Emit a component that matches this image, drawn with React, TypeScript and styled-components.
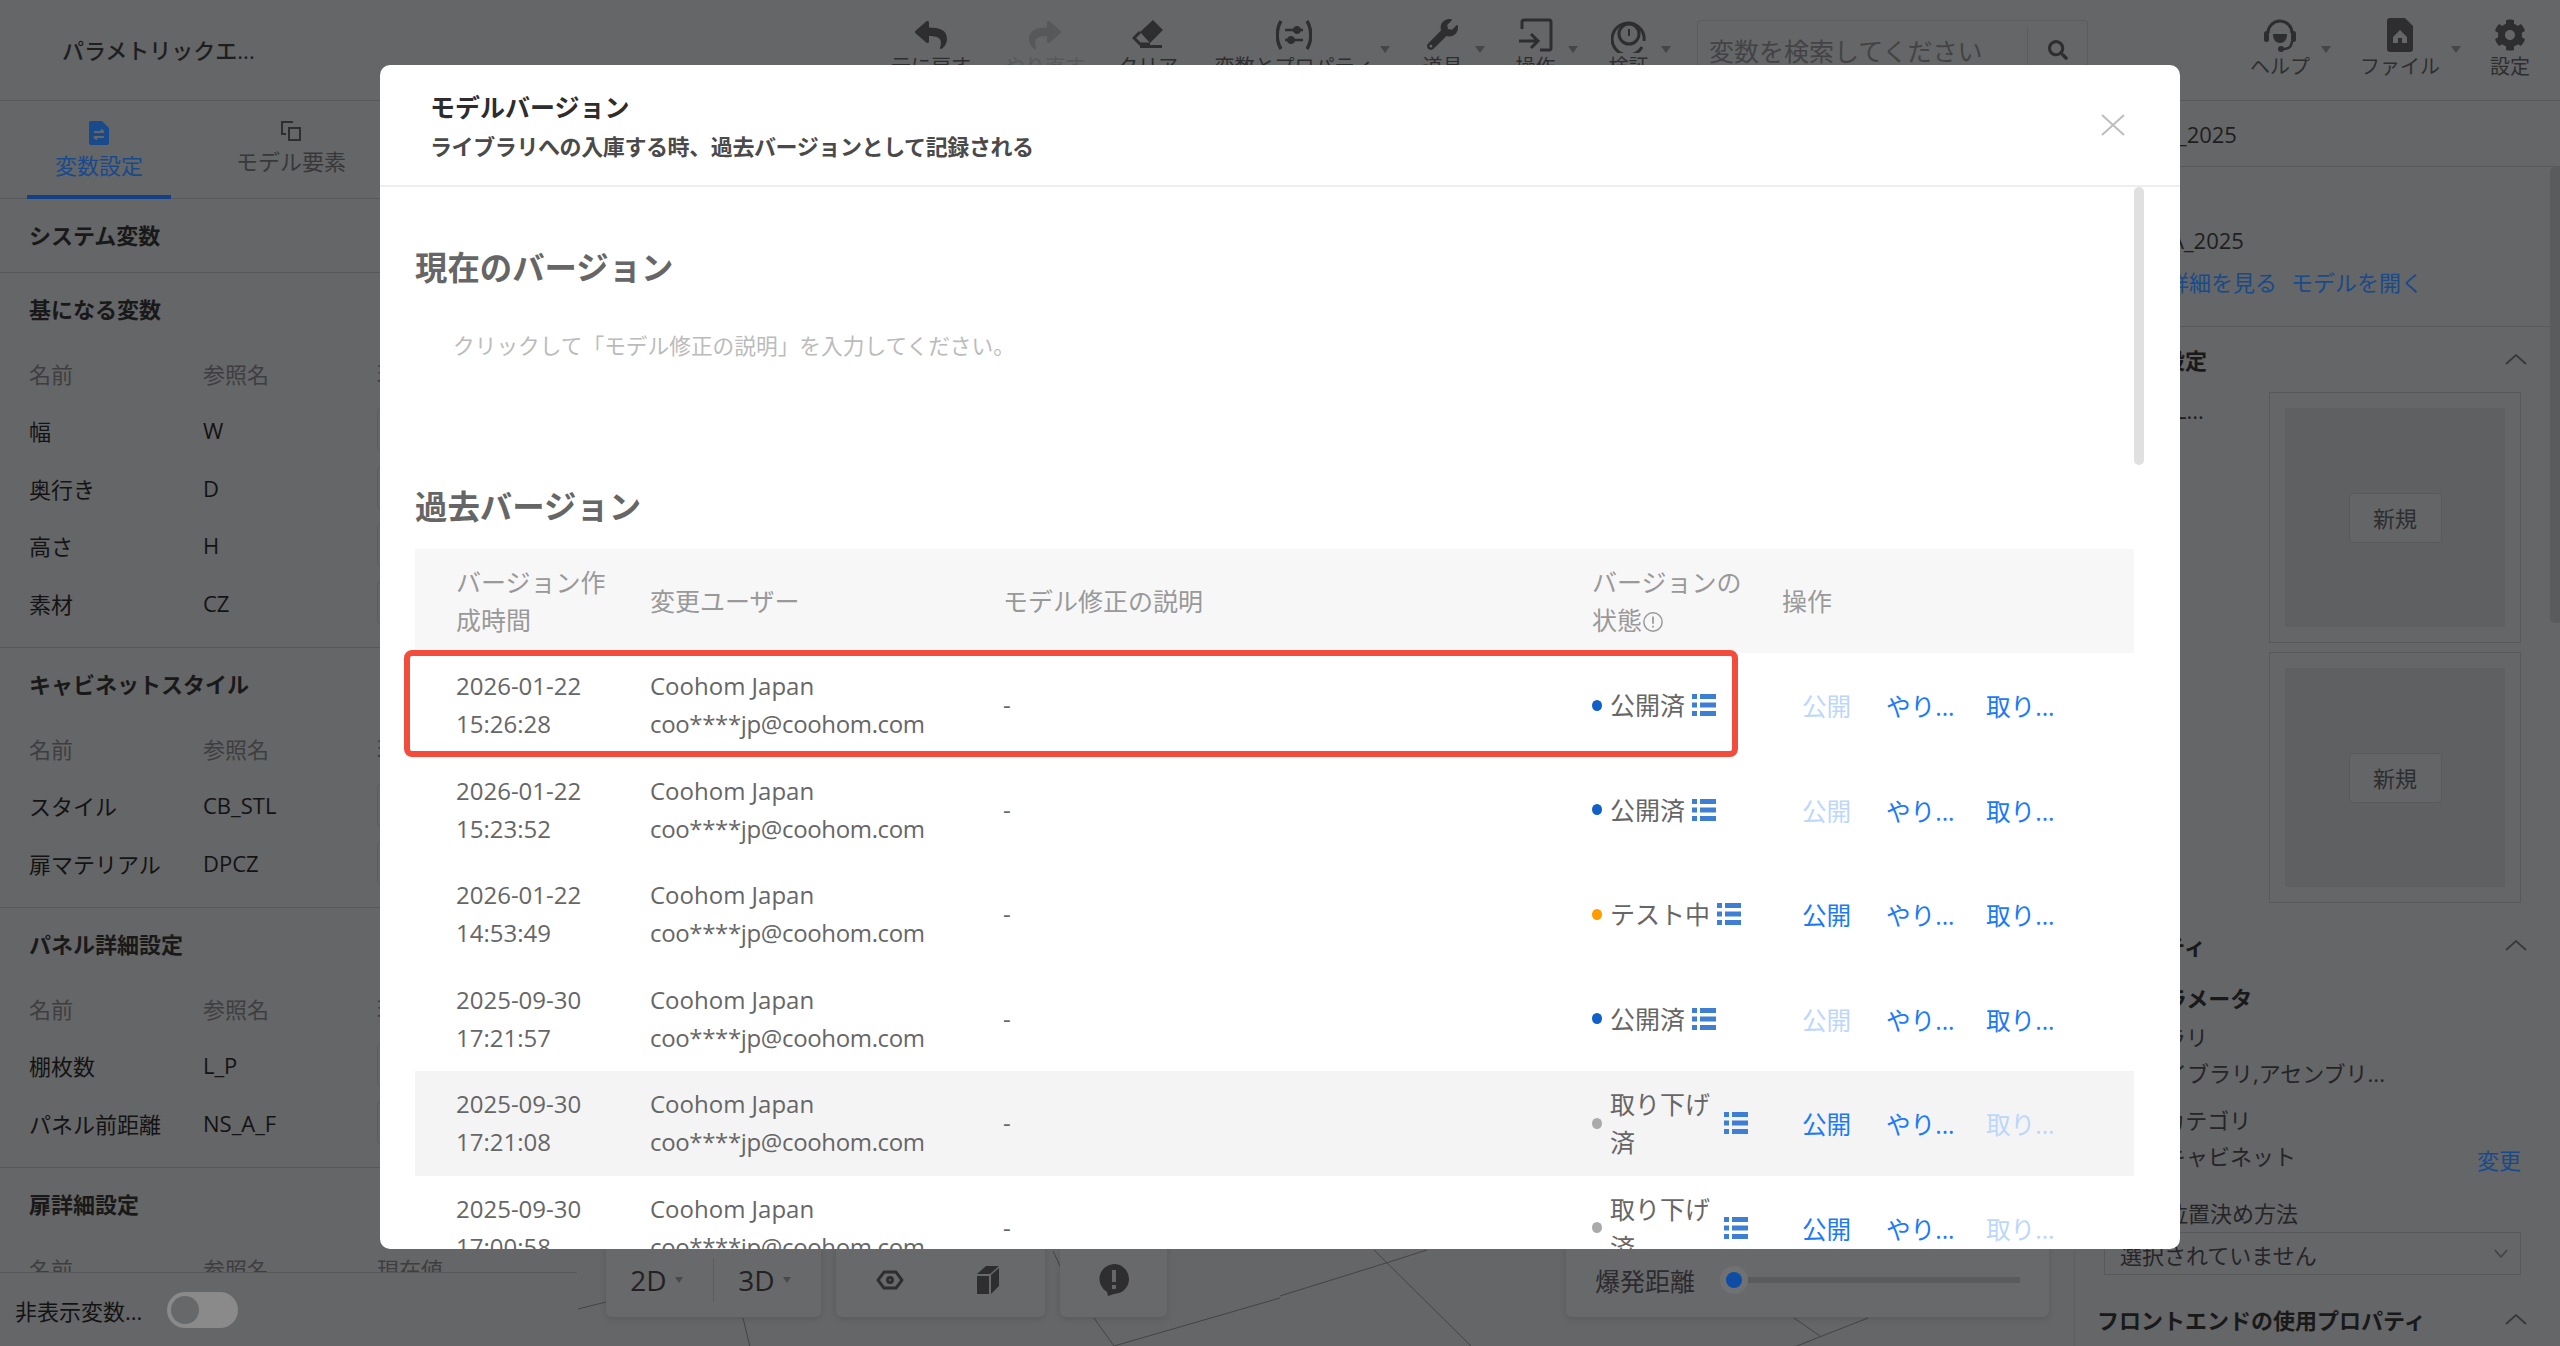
import React from 'react'
import styled, { createGlobalStyle } from 'styled-components'
import { FaCog, FaReply, FaSearch, FaShare, FaWrench } from 'react-icons/fa'

const GlobalStyle = createGlobalStyle`
  html, body {
    margin: 0;
    padding: 0;
    background: #656667;
  }
  * {
    box-sizing: border-box;
  }
  body {
    font-family: "Open Sans", "Noto Sans CJK JP", sans-serif;
    color: #131314;
  }
`

const versions = [
  { date: '2026-01-22', time: '15:26:28', status: 'published', publish: false, revoke: true },
  { date: '2026-01-22', time: '15:23:52', status: 'published', publish: false, revoke: true },
  { date: '2026-01-22', time: '14:53:49', status: 'testing', publish: true, revoke: true },
  { date: '2025-09-30', time: '17:21:57', status: 'published', publish: false, revoke: true },
  { date: '2025-09-30', time: '17:21:08', status: 'revoked', publish: true, revoke: false },
  { date: '2025-09-30', time: '17:00:58', status: 'revoked', publish: true, revoke: false },
]

const statusLabel = { published: '公開済', testing: 'テスト中', revoked: '取り下げ済' }
const statusColor = { published: '#1160c8', testing: '#ff9d00', revoked: '#aaaaaa' }

function EraserIcon() {
  return (
    <svg width="32" height="30" viewBox="0 0 32 30">
      <path d="M21 0 31 10 18 23 8 12Z" fill="currentColor" />
      <path d="M8 12 2 18 8 24H18" fill="none" stroke="currentColor" strokeWidth="3" />
      <path d="M8 26.5H30" stroke="currentColor" strokeWidth="3" />
    </svg>
  )
}

function VarIcon() {
  return (
    <svg width="36" height="30" viewBox="0 0 36 30" fill="none" stroke="currentColor">
      <path d="M5 1C0 9 0 21 5 29M31 1C36 9 36 21 31 29" strokeWidth="3.4" />
      <path d="M9 10H27M9 20H27" strokeWidth="2.4" />
      <circle cx="21" cy="10" r="3.6" fill="currentColor" />
      <circle cx="15" cy="20" r="3.6" fill="currentColor" />
    </svg>
  )
}

function EnterIcon() {
  return (
    <svg width="34" height="34" viewBox="0 0 34 34" fill="none" stroke="currentColor" strokeWidth="3">
      <path d="M3 11V4Q3 2 5 2H30Q32 2 32 4V30Q32 32 30 32H21" />
      <path d="M0 23H19M12 16 19 23 12 30" />
    </svg>
  )
}

function VerifyIcon() {
  return (
    <svg width="36" height="36" viewBox="0 0 36 36" fill="none" stroke="currentColor">
      <path d="M31 30A16 16 0 1 1 33 24" strokeWidth="3" />
      <circle cx="18" cy="17" r="10" strokeWidth="3" />
      <path d="M18 12V19" strokeWidth="2" />
    </svg>
  )
}

function HeadsetIcon() {
  return (
    <svg width="34" height="34" viewBox="0 0 34 34" fill="currentColor">
      <path d="M5 15A12 12 0 0 1 29 15" fill="none" stroke="currentColor" strokeWidth="3" />
      <rect x="1" y="13" width="5" height="11" rx="2.5" />
      <rect x="28" y="13" width="5" height="11" rx="2.5" />
      <path d="M10 16H24C24 22 21 25 17 25S10 22 10 16Z" />
      <path d="M29 23Q29 31 20 31" fill="none" stroke="currentColor" strokeWidth="2.4" />
      <circle cx="18" cy="31" r="3" />
    </svg>
  )
}

function FileHomeIcon() {
  return (
    <svg width="26" height="34" viewBox="0 0 26 34">
      <path d="M3 0H18L26 8V31Q26 34 23 34H3Q0 34 0 31V3Q0 0 3 0Z" fill="currentColor" />
      <path d="M13 12 20 19V25H15V20H11V25H6V19Z" fill="#656667" />
    </svg>
  )
}

function TabDocIcon() {
  return (
    <svg width="20" height="24" viewBox="0 0 20 24">
      <path d="M2 0H13L20 7V22Q20 24 18 24H2Q0 24 0 22V2Q0 0 2 0Z" fill="#184a8c" />
      <path d="M5 11H15M5 16H15M12 8.5 15 11M8 18.5 5 16" stroke="#656667" strokeWidth="2" fill="none" />
    </svg>
  )
}

function TabElementIcon() {
  return (
    <svg width="20" height="20" viewBox="0 0 20 20" fill="none" stroke="#2e2e30" strokeWidth="2">
      <path d="M12 1H1V13H5" />
      <rect x="8" y="7" width="11" height="12" />
    </svg>
  )
}

function HexEyeIcon({ size = 28 }: { size?: number }) {
  return (
    <svg width={size} height={size * 0.72} viewBox="0 0 28 20" fill="none" stroke="#2e2e30" strokeWidth="3">
      <path d="M8 2H20L26 10 20 18H8L2 10Z" strokeLinejoin="round" />
      <circle cx="14" cy="10" r="2.5" />
    </svg>
  )
}

function StarFileIcon() {
  return (
    <svg width="26" height="28" viewBox="0 0 26 28" fill="none" stroke="#2e2e30" strokeWidth="3">
      <path d="M2 8V2H18L24 8V26H2V20" />
      <path d="M13 9 15 13 19 13.5 16 16.5 17 20.5 13 18.5 9 20.5 10 16.5 7 13.5 11 13Z" fill="#2e2e30" stroke="none" />
    </svg>
  )
}

function CubeIcon() {
  return (
    <svg width="24" height="30" viewBox="0 0 24 30" fill="#2e2e30">
      <path d="M1 9 10 1H23L14 9Z" />
      <path d="M1 11H13V29H1Z" />
      <path d="M15 10 23 3V21L15 29Z" />
    </svg>
  )
}

function AlertIcon() {
  return (
    <svg width="30" height="32" viewBox="0 0 30 32">
      <path d="M15 0A15 15 0 0 1 15 30L9 32 8 28A15 15 0 0 1 15 0Z" fill="#2e2e30" />
      <rect x="13" y="6" width="4" height="12" fill="#656667" />
      <rect x="13" y="21" width="4" height="4" fill="#656667" />
    </svg>
  )
}

function ChevronUp() {
  return (
    <svg width="22" height="12" viewBox="0 0 22 12" fill="none" stroke="#3a3a3c" strokeWidth="2">
      <path d="M1 11 11 2 21 11" />
    </svg>
  )
}

function ListIcon() {
  return (
    <ListSvg viewBox="0 0 24 22">
      <rect x="0" y="0" width="5" height="5" />
      <rect x="8" y="0" width="16" height="5" />
      <rect x="0" y="8.5" width="5" height="5" />
      <rect x="8" y="8.5" width="16" height="5" />
      <rect x="0" y="17" width="5" height="5" />
      <rect x="8" y="17" width="16" height="5" />
    </ListSvg>
  )
}

function ToolButton(props: { width: number; icon: React.ReactNode; label: string; caret?: boolean; faded?: boolean }) {
  return (
    <ToolItem $width={props.width} $faded={props.faded}>
      <ToolIcon>{props.icon}</ToolIcon>
      <ToolLabel>{props.label}</ToolLabel>
      {props.caret && <ToolCaret />}
    </ToolItem>
  )
}

function VarSection(props: { title: string; rows: string[][]; actions?: boolean }) {
  return (
    <SideSection>
      <SideHead>
        <SideTitle>{props.title}</SideTitle>
        {props.actions && (
          <SideActions>
            <HexEyeIcon />
            <StarFileIcon />
          </SideActions>
        )}
      </SideHead>
      <VarRow>
        <VarHead>名前</VarHead>
        <VarHead>参照名</VarHead>
        <VarHead>現在値</VarHead>
      </VarRow>
      {props.rows.map((row) => (
        <VarRow key={row[0]}>
          <span>{row[0]}</span>
          <span>{row[1]}</span>
          <VarInput />
        </VarRow>
      ))}
    </SideSection>
  )
}

export default function App() {
  return (
    <Page>
      <GlobalStyle />
      <TopBar>
        <DocTitle>パラメトリックエ...</DocTitle>
        <ToolButton width={114} icon={<FaReply size={32} />} label="元に戻す" />
        <ToolButton width={114} icon={<FaShare size={32} />} label="やり直す" faded />
        <ToolButton width={92} icon={<EraserIcon />} label="クリア" />
        <ToolButton width={200} icon={<VarIcon />} label="変数とプロパティ" caret />
        <ToolSpacer />
        <ToolButton width={93} icon={<FaWrench size={31} />} label="道具" caret />
        <ToolButton width={93} icon={<EnterIcon />} label="操作" caret />
        <ToolButton width={93} icon={<VerifyIcon />} label="検証" caret />
        <SearchBox>
          <SearchText>変数を検索してください</SearchText>
          <SearchButton>
            <FaSearch size={20} />
          </SearchButton>
        </SearchBox>
        <ToolGap />
        <ToolButton width={110} icon={<HeadsetIcon />} label="ヘルプ" caret />
        <ToolButton width={130} icon={<FileHomeIcon />} label="ファイル" caret />
        <ToolButton width={90} icon={<FaCog size={32} />} label="設定" />
      </TopBar>

      <Main>
        <LeftPanel>
          <Tabs>
            <Tab $active $width={144} $left={27}>
              <TabDocIcon />
              <TabLabel $active>変数設定</TabLabel>
            </Tab>
            <Tab $width={120} $left={60}>
              <TabElementIcon />
              <TabLabel>モデル要素</TabLabel>
            </Tab>
          </Tabs>
          <SideScroll>
            <SystemRow>
              <SideTitle>システム変数</SideTitle>
            </SystemRow>
            <VarSection title="基になる変数" rows={[['幅', 'W'], ['奥行き', 'D'], ['高さ', 'H'], ['素材', 'CZ']]} />
            <VarSection title="キャビネットスタイル" actions rows={[['スタイル', 'CB_STL'], ['扉マテリアル', 'DPCZ']]} />
            <VarSection title="パネル詳細設定" actions rows={[['棚枚数', 'L_P'], ['パネル前距離', 'NS_A_F']]} />
            <VarSection title="扉詳細設定" actions rows={[]} />
          </SideScroll>
          <HiddenBar>
            <span>非表示変数...</span>
            <Toggle>
              <ToggleKnob />
            </Toggle>
          </HiddenBar>
        </LeftPanel>

        <Canvas>
          <CanvasLines>
            <g transform="translate(-577 -100)" stroke="#444446" fill="none">
              <path d="M578 1308 606 1301M743 1317 750 1346M1053 1250 1061 1267M1094 1317 1114 1345 1280 1297" />
              <path d="M1280 1295 1386 1262 1427 1249M1374 1249 1472 1346M1794 1346 1868 1317M1794 1317 1820 1335" />
            </g>
          </CanvasLines>
          <ControlRow>
            <ControlPanel $width={215}>
              <ViewSwitch>
                2D<SmallCaret />
              </ViewSwitch>
              <ViewDivider />
              <ViewSwitch>
                3D<SmallCaret />
              </ViewSwitch>
            </ControlPanel>
            <ControlPanel $width={209} $gap>
              <HexEyeIcon size={28} />
              <CubeIcon />
            </ControlPanel>
            <ControlPanel $width={107} $gap>
              <AlertIcon />
            </ControlPanel>
            <ExplodePanel>
              <ExplodeLabel>爆発距離</ExplodeLabel>
              <SliderTrack>
                <SliderHandle />
              </SliderTrack>
            </ExplodePanel>
          </ControlRow>
        </Canvas>

        <RightPanel>
          <RightName>_2025</RightName>
          <RightInfo>
            <InfoName>A_2025</InfoName>
            <InfoLinks>
              <BlueLink>詳細を見る</BlueLink>
              <BlueLink>モデルを開く</BlueLink>
            </InfoLinks>
          </RightInfo>
          <RightHead>
            <SideTitle>モデル設定</SideTitle>
            <ChevronUp />
          </RightHead>
          <PreviewArea>
            <PreviewNote>L...</PreviewNote>
            <PreviewList>
              <PreviewBox>
                <PreviewInner>
                  <NewButton>新規</NewButton>
                </PreviewInner>
              </PreviewBox>
              <PreviewBox>
                <PreviewInner>
                  <NewButton>新規</NewButton>
                </PreviewInner>
              </PreviewBox>
            </PreviewList>
          </PreviewArea>
          <RightHead $top={10}>
            <SideTitle>プロパティ</SideTitle>
            <ChevronUp />
          </RightHead>
          <ParamTitle>パラメータ</ParamTitle>
          <PropLine $top={5} $indent={23}>ライブラリ</PropLine>
          <PropLine $indent={68}>ライブラリ,アセンブリ...</PropLine>
          <PropLine $top={11} $indent={23}>モデルカテゴリ</PropLine>
          <PropLine $indent={89}>
            キャビネット
            <ChangeLink>変更</ChangeLink>
          </PropLine>
          <PropLine $top={21} $indent={91}>位置決め方法</PropLine>
          <SelectBox>
            <span>選択されていません</span>
            <SelectArrow viewBox="0 0 16 10">
              <path d="M1 1 8 9 15 1" fill="none" stroke="#3f3f41" strokeWidth="1.5" />
            </SelectArrow>
          </SelectBox>
          <RightHead $top={12}>
            <SideTitle>フロントエンドの使用プロパティ</SideTitle>
            <ChevronUp />
          </RightHead>
          <RightScrollbar />
        </RightPanel>
      </Main>

      <Modal>
        <ModalHeader>
          <ModalTitle>モデルバージョン</ModalTitle>
          <ModalSubtitle>ライブラリへの入庫する時、過去バージョンとして記録される</ModalSubtitle>
          <CloseIcon viewBox="0 0 24 22">
            <path d="M1 1 23 21M23 1 1 21" stroke="#bdbdbd" strokeWidth="2" />
          </CloseIcon>
        </ModalHeader>
        <ModalBody>
          <SectionHeading>現在のバージョン</SectionHeading>
          <Placeholder>クリックして「モデル修正の説明」を入力してください。</Placeholder>
          <SectionHeading $top={122}>過去バージョン</SectionHeading>
          <VersionTable>
            <HeaderRow>
              <HeaderCell>バージョン作<br />成時間</HeaderCell>
              <HeaderCell>変更ユーザー</HeaderCell>
              <HeaderCell>モデル修正の説明</HeaderCell>
              <HeaderCell>
                バージョンの<br />状態
                <InfoMark viewBox="0 0 18 18">
                  <circle cx="9" cy="9" r="7.5" fill="none" stroke="#999" strokeWidth="1.2" />
                  <path d="M9 4.5V10.5M9 12V13.6" stroke="#999" strokeWidth="1.4" />
                </InfoMark>
              </HeaderCell>
              <HeaderCell>操作</HeaderCell>
            </HeaderRow>
            {versions.map((version, index) => (
              <VersionRow key={version.time} $hover={index === 4}>
                {index === 0 && <Highlight />}
                <Cell>{version.date}<br />{version.time}</Cell>
                <Cell>Coohom Japan<br /><Email>coo****jp@coohom.com</Email></Cell>
                <Cell>-</Cell>
                <StatusCell>
                  <StatusDot $color={statusColor[version.status]} />
                  <StatusText>{statusLabel[version.status]}</StatusText>
                  <ListIcon />
                </StatusCell>
                <ActionCell>
                  <ActionLink $off={!version.publish} $width={84}>公開</ActionLink>
                  <ActionLink $width={100}>やり...</ActionLink>
                  <ActionLink $off={!version.revoke} $width={100}>取り...</ActionLink>
                </ActionCell>
              </VersionRow>
            ))}
          </VersionTable>
        </ModalBody>
        <ModalScrollbar />
      </Modal>
    </Page>
  )
}

const Page = styled.div`
  position: relative;
  width: 2560px;
  height: 1346px;
  overflow: hidden;
  display: flex;
  flex-direction: column;
  background: #656667;
  font-size: 22px;
`

const TopBar = styled.header`
  height: 101px;
  flex: none;
  display: flex;
  align-items: flex-start;
  padding-left: 62px;
  border-bottom: 1px solid #58595a;
`

const DocTitle = styled.div`
  width: 812px;
  height: 100px;
  line-height: 100px;
  font-size: 22px;
  font-weight: 500;
  color: #1e1e1f;
`

const ToolItem = styled.div<{ $width: number; $faded?: boolean }>`
  position: relative;
  width: ${(p) => p.$width}px;
  flex: none;
  display: flex;
  flex-direction: column;
  align-items: center;
  padding-top: 18px;
  color: ${(p) => (p.$faded ? '#57585a' : '#2e2e30')};
`

const ToolIcon = styled.div`
  height: 33px;
  display: flex;
  align-items: center;
  justify-content: center;
`

const ToolLabel = styled.div`
  height: 32px;
  line-height: 32px;
  font-size: 20px;
  white-space: nowrap;
  color: inherit;
`

const ToolCaret = styled.span`
  position: absolute;
  right: 4px;
  top: 46px;
  border-left: 5px solid transparent;
  border-right: 5px solid transparent;
  border-top: 7px solid #454648;
`

const ToolSpacer = styled.div`
  width: 2px;
  flex: none;
`

const ToolGap = styled.div`
  width: 137px;
  flex: none;
`

const SearchBox = styled.div`
  width: 391px;
  height: 60px;
  flex: none;
  margin: 20px 0 0 22px;
  display: flex;
  align-items: center;
  border: 1px solid #5b5c5d;
  border-radius: 4px;
`

const SearchText = styled.div`
  flex: 1;
  padding-left: 11px;
  font-size: 25px;
  color: #434345;
  white-space: nowrap;
`

const SearchButton = styled.div`
  width: 60px;
  height: 44px;
  display: flex;
  align-items: center;
  justify-content: center;
  border-left: 1px solid #5b5c5d;
  color: #2e2e30;
`

const Main = styled.main`
  flex: 1;
  min-height: 0;
  display: flex;
`

const LeftPanel = styled.aside`
  width: 577px;
  flex: none;
  display: flex;
  flex-direction: column;
`

const Tabs = styled.div`
  height: 98px;
  flex: none;
  display: flex;
  border-bottom: 1px solid #58595a;
`

const Tab = styled.div<{ $active?: boolean; $width: number; $left: number }>`
  width: ${(p) => p.$width}px;
  margin-left: ${(p) => p.$left}px;
  display: flex;
  flex-direction: column;
  align-items: center;
  padding-top: 20px;
  border-bottom: 4px solid ${(p) => (p.$active ? '#123f85' : 'transparent')};
  margin-bottom: -1px;
`

const TabLabel = styled.div<{ $active?: boolean }>`
  margin-top: 4px;
  line-height: 32px;
  font-size: 22px;
  white-space: nowrap;
  color: ${(p) => (p.$active ? '#184a8c' : '#38383a')};
`

const SideScroll = styled.div`
  flex: 1;
  min-height: 0;
  overflow: hidden;
`

const SystemRow = styled.div`
  height: 74px;
  display: flex;
  align-items: center;
  padding: 0 0 3px 29px;
  border-bottom: 1px solid #58595a;
`

const SideTitle = styled.div`
  font-size: 22px;
  font-weight: 700;
  color: #19191a;
  white-space: nowrap;
`

const SideSection = styled.section`
  padding-bottom: 13px;
  border-bottom: 1px solid #58595a;
`

const SideHead = styled.div`
  height: 73.5px;
  display: flex;
  align-items: center;
  justify-content: space-between;
  padding: 0 203px 3px 29px;
`

const SideActions = styled.div`
  display: flex;
  align-items: center;
  gap: 26px;
  margin-right: -171px;
`

const VarRow = styled.div`
  display: grid;
  grid-template-columns: 174px 174px 1fr;
  height: 57.5px;
  align-items: center;
  padding: 0 0 5px 29px;
  font-size: 22px;
  color: #131314;
`

const VarHead = styled.span`
  color: #3e3e40;
`

const VarInput = styled.div`
  height: 42px;
  border: 1px solid #5b5c5d;
  border-radius: 3px;
`

const HiddenBar = styled.div`
  height: 74px;
  flex: none;
  display: flex;
  align-items: center;
  gap: 25px;
  padding-left: 15px;
  border-top: 1px solid #58595a;
  background: #656667;
  font-size: 22px;
  color: #131314;
`

const Toggle = styled.div`
  width: 71px;
  height: 36px;
  border-radius: 18px;
  padding: 4px;
  background: #8a8a8b;
`

const ToggleKnob = styled.div`
  width: 28px;
  height: 28px;
  border-radius: 50%;
  background: #676869;
`

const Canvas = styled.div`
  position: relative;
  flex: 1;
  min-width: 0;
`

const CanvasLines = styled.svg`
  position: absolute;
  inset: 0;
  width: 100%;
  height: 100%;
`

const ControlRow = styled.div`
  position: absolute;
  left: 29px;
  right: 25px;
  bottom: 29px;
  display: flex;
  gap: 15px;
`

const ControlPanel = styled.div<{ $width: number; $gap?: boolean }>`
  width: ${(p) => p.$width}px;
  height: 74px;
  display: flex;
  align-items: center;
  justify-content: ${(p) => (p.$gap ? 'center' : 'flex-start')};
  gap: 72px;
  padding-right: ${(p) => (p.$gap ? 5 : 0)}px;
  border-radius: 6px;
  background: #68696b;
  box-shadow: 0 2px 6px rgba(0, 0, 0, 0.12);

  &:first-child {
    gap: 0;
  }

  &:nth-child(3) {
    padding-right: 0;
  }
`

const ViewSwitch = styled.div`
  flex: 1;
  display: flex;
  align-items: center;
  justify-content: center;
  gap: 8px;
  padding-right: 6px;
  font-size: 28px;
  color: #222224;
`

const SmallCaret = styled.span`
  border-left: 4px solid transparent;
  border-right: 4px solid transparent;
  border-top: 6px solid #48494b;
`

const ViewDivider = styled.div`
  width: 1px;
  height: 44px;
  background: #5b5c5d;
`

const ExplodePanel = styled.div`
  width: 483px;
  height: 74px;
  margin-left: auto;
  margin-right: 0;
  display: flex;
  align-items: center;
  padding: 0 29px;
  border-radius: 6px;
  background: #68696b;
  box-shadow: 0 2px 6px rgba(0, 0, 0, 0.12);
`

const ExplodeLabel = styled.div`
  font-size: 25px;
  color: #2c2c2e;
  white-space: nowrap;
`

const SliderTrack = styled.div`
  position: relative;
  flex: 1;
  height: 6px;
  margin-left: 31px;
  background: #5a5b5c;
`

const SliderHandle = styled.div`
  position: absolute;
  left: 0;
  top: -5px;
  width: 16px;
  height: 16px;
  border-radius: 50%;
  background: #0e4da4;
  box-shadow: 0 0 0 6px #707172;
`

const RightPanel = styled.aside`
  position: relative;
  width: 486px;
  flex: none;
  border-left: 1px solid #5e5f60;
  overflow: hidden;
`

const RightName = styled.div`
  height: 66px;
  line-height: 66px;
  padding-left: 102px;
  font-size: 22px;
  color: #1e1e1f;
  border-bottom: 1px solid #58595a;
`

const RightInfo = styled.div`
  height: 160px;
  padding: 54px 0 0 92px;
  border-bottom: 1px solid #58595a;
`

const InfoName = styled.div`
  padding-left: 3px;
  line-height: 38px;
  color: #1e1e1f;
`

const InfoLinks = styled.div`
  display: flex;
  gap: 14px;
  margin-top: 4px;
  line-height: 38px;
`

const BlueLink = styled.span`
  color: #184a8c;
  white-space: nowrap;
`

const RightHead = styled.div<{ $top?: number }>`
  height: 66px;
  flex: none;
  margin-top: ${(p) => p.$top ?? 0}px;
  display: flex;
  align-items: center;
  justify-content: space-between;
  padding: 0 33px 2px 22px;
`

const PreviewArea = styled.div`
  display: flex;
  justify-content: space-between;
  margin-top: -1px;
  padding: 0 39px 0 100px;
`

const PreviewNote = styled.div`
  margin-top: 2px;
  line-height: 32px;
  color: #1e1e1f;
`

const PreviewList = styled.div`
  display: flex;
  flex-direction: column;
  gap: 9px;
`

const PreviewBox = styled.div`
  width: 252px;
  height: 251px;
  padding: 15px;
  border: 1px solid #58595a;
`

const PreviewInner = styled.div`
  height: 100%;
  display: flex;
  align-items: center;
  justify-content: center;
  background: #5f6061;
`

const NewButton = styled.div`
  width: 93px;
  height: 50px;
  line-height: 48px;
  text-align: center;
  border: 1px solid #58595a;
  border-radius: 4px;
  background: #646566;
  color: #2e2e30;
`

const ParamTitle = styled.div`
  height: 32px;
  margin-top: 3px;
  line-height: 32px;
  padding-left: 68px;
  font-weight: 700;
  color: #19191a;
`

const PropLine = styled.div<{ $top?: number; $indent: number }>`
  height: 36px;
  line-height: 36px;
  margin-top: ${(p) => p.$top ?? 0}px;
  padding: 0 39px 0 ${(p) => p.$indent}px;
  display: flex;
  justify-content: space-between;
  color: #252527;
  white-space: nowrap;
`

const ChangeLink = styled.span`
  position: relative;
  top: 4px;
  color: #184a8c;
`

const SelectBox = styled.div`
  height: 43px;
  margin: 1px 39px 0 29px;
  padding: 0 12px 0 15px;
  display: flex;
  align-items: center;
  justify-content: space-between;
  border: 1px solid #58595a;
  color: #252527;
`

const SelectArrow = styled.svg`
  width: 14px;
  height: 9px;
`

const RightScrollbar = styled.div`
  position: absolute;
  right: 0;
  top: 66px;
  width: 10px;
  height: 456px;
  border-radius: 5px 0 0 5px;
  background: #5a5b5c;
`

const Modal = styled.div`
  position: absolute;
  left: 380px;
  top: 65px;
  width: 1800px;
  height: 1184px;
  display: flex;
  flex-direction: column;
  border-radius: 10px;
  overflow: hidden;
  background: #fff;
`

const ModalHeader = styled.div`
  position: relative;
  height: 122px;
  flex: none;
  padding: 25px 0 0 50px;
  border-bottom: 2px solid #eeeeee;
`

const ModalTitle = styled.div`
  line-height: 34px;
  font-size: 25px;
  font-weight: 700;
  color: #2d2d2d;
`

const ModalSubtitle = styled.div`
  margin-top: 6px;
  line-height: 32px;
  font-size: 22px;
  font-weight: 700;
  letter-spacing: -0.4px;
  color: #4a4a4a;
`

const CloseIcon = styled.svg`
  position: absolute;
  left: 1721px;
  top: 49px;
  width: 24px;
  height: 22px;
`

const ModalBody = styled.div`
  flex: 1;
  min-height: 0;
  overflow: hidden;
  padding: 58px 0 0 35px;
`

const SectionHeading = styled.h2<{ $top?: number }>`
  margin: ${(p) => p.$top ?? 0}px 0 0;
  line-height: 44px;
  font-size: 32.4px;
  font-weight: 700;
  color: #666666;
`

const Placeholder = styled.div`
  margin-top: 41px;
  padding-left: 38px;
  line-height: 32px;
  font-size: 21.7px;
  color: #bbbbbb;
`

const VersionTable = styled.div`
  width: 1719px;
  margin-top: 21px;
`

const columns = '194px 353px 589px 190px 393px'

const HeaderRow = styled.div`
  display: grid;
  grid-template-columns: ${columns};
  height: 104px;
  align-items: center;
  background: #f7f7f7;
`

const HeaderCell = styled.div`
  padding-left: 41px;
  line-height: 38px;
  font-size: 25px;
  color: #999999;
  white-space: nowrap;
`

const InfoMark = styled.svg`
  width: 22px;
  height: 22px;
  vertical-align: -3px;
`

const VersionRow = styled.div<{ $hover?: boolean }>`
  position: relative;
  display: grid;
  grid-template-columns: ${columns};
  height: 104.5px;
  align-items: center;
  background: ${(p) => (p.$hover ? '#f4f4f4' : '#ffffff')};
`

const Highlight = styled.div`
  position: absolute;
  left: -11px;
  top: -3px;
  width: 1334px;
  height: 107px;
  border: 6px solid #f24c3d;
  border-radius: 8px;
`

const Cell = styled.div`
  padding-left: 41px;
  line-height: 38px;
  font-size: 24px;
  color: #666666;
  white-space: nowrap;
`

const Email = styled.span`
  letter-spacing: -0.35px;
`

const StatusCell = styled.div`
  display: flex;
  align-items: center;
  padding-left: 41px;
  font-size: 25px;
  line-height: 38px;
  color: #666666;
`

const StatusDot = styled.span<{ $color: string }>`
  width: 10px;
  height: 11px;
  flex: none;
  border-radius: 50%;
  background: ${(p) => p.$color};
`

const StatusText = styled.span`
  flex: none;
  max-width: 107px;
  margin: 0 7px 0 8px;
`

const ListSvg = styled.svg`
  width: 24px;
  height: 22px;
  flex: none;
  fill: #3f7fd3;
`

const ActionCell = styled.div`
  display: flex;
  padding-left: 61px;
  font-size: 24.6px;
`

const ActionLink = styled.span<{ $off?: boolean; $width: number }>`
  width: ${(p) => p.$width}px;
  flex: none;
  color: ${(p) => (p.$off ? '#bcd7fb' : '#1a7af8')};
`

const ModalScrollbar = styled.div`
  position: absolute;
  left: 1754px;
  top: 122px;
  width: 10px;
  height: 278px;
  border-radius: 5px;
  background: #e0e0e0;
`
